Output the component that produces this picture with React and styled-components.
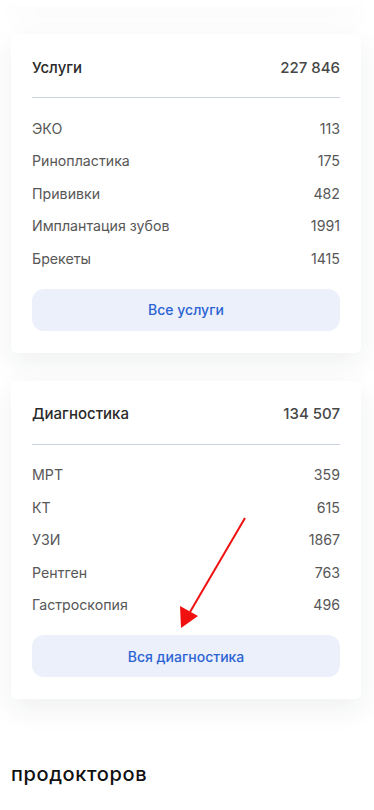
import React from "react";
import styled, { createGlobalStyle } from "styled-components";

const GlobalStyle = createGlobalStyle`
  html, body {
    margin: 0;
    padding: 0;
    background: #fff;
    font-family: Inter, "Noto Sans", "Liberation Sans", sans-serif;
  }
`;

const services = [
  ["ЭКО", "113"],
  ["Ринопластика", "175"],
  ["Прививки", "482"],
  ["Имплантация зубов", "1991"],
  ["Брекеты", "1415"],
];

const diagnostics = [
  ["МРТ", "359"],
  ["КТ", "615"],
  ["УЗИ", "1867"],
  ["Рентген", "763"],
  ["Гастроскопия", "496"],
];

const Stat = ({ title, total, items, button }) => (
  <Card>
    <Header>
      <span>{title}</span>
      <Total>{total}</Total>
    </Header>
    <List>
      {items.map(([name, count]) => (
        <Row key={name}>
          <span>{name}</span>
          <span>{count}</span>
        </Row>
      ))}
    </List>
    <Button>{button}</Button>
  </Card>
);

const App = () => (
  <Page>
    <GlobalStyle />
    <CardStub />
    <Stat title="Услуги" total="227 846" items={services} button="Все услуги" />
    <Stat
      title="Диагностика"
      total="134 507"
      items={diagnostics}
      button="Вся диагностика"
    />
    <Footer>продокторов</Footer>
    <Arrow viewBox="0 0 374 810">
      <line x1="245" y1="518" x2="190" y2="612" stroke="#f01010" strokeWidth="2" />
      <polygon points="181,628 180,606 198,616" fill="#f01010" />
    </Arrow>
  </Page>
);

const Page = styled.div`
  position: relative;
  width: 374px;
  min-height: 810px;
  display: flex;
  flex-direction: column;
  gap: 28px;
  padding: 0 13px 0 11px;
  box-sizing: border-box;
  overflow: hidden;
`;

const CardStub = styled.div`
  height: 6px;
  background: #fff;
  border-radius: 0 0 6px 6px;
  box-shadow: 0 10px 28px rgba(30, 40, 60, 0.07);
`;

const Card = styled.div`
  background: #fff;
  border-radius: 6px;
  padding: 22px 21px 22px;
  box-shadow: 0 10px 28px rgba(30, 40, 60, 0.07);
`;

const Header = styled.div`
  display: flex;
  justify-content: space-between;
  align-items: center;
  height: 22px;
  padding-bottom: 19px;
  border-bottom: 1px solid #c9d3e0;
  font-size: 15px;
  font-weight: 500;
  color: #2a2a2a;
  -webkit-font-smoothing: antialiased;
`;

const Total = styled.span`
  color: #474747;
`;

const List = styled.div`
  display: flex;
  flex-direction: column;
  padding: 14px 0 14px;
`;

const Row = styled.div`
  display: flex;
  justify-content: space-between;
  align-items: center;
  height: 32.5px;
  font-size: 14.2px;
  color: #575757;
`;

const Button = styled.div`
  height: 42px;
  border-radius: 12px;
  background: #ebf0fb;
  color: #2c63d3;
  font-size: 14px;
  font-weight: 500;
  display: flex;
  align-items: center;
  justify-content: center;
`;

const Footer = styled.div`
  margin-top: 35px;
  font-size: 20px;
  font-weight: 500;
  color: #111;
  letter-spacing: 0.6px;
`;

const Arrow = styled.svg`
  position: absolute;
  left: 0;
  top: 0;
  width: 374px;
  height: 810px;
  pointer-events: none;
`;

export default App;
